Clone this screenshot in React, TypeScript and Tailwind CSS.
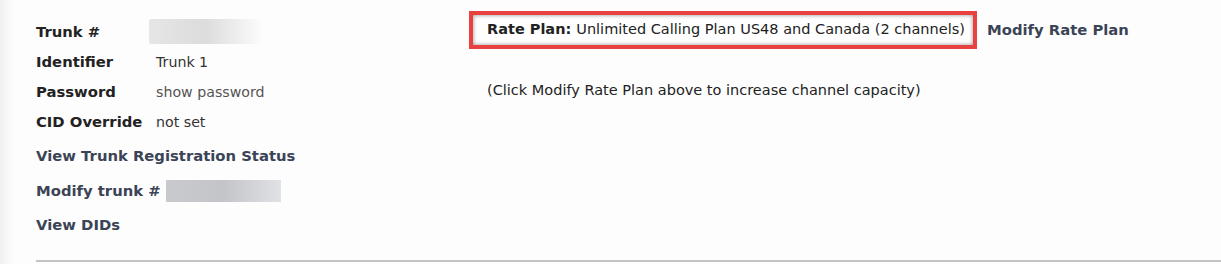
import React from "react";

export default function App() {
  const label = "font-bold text-[#222] text-[14.8px]";
  const link = "font-bold text-[#3b4456] text-[14.8px]";
  return (
    <div className="w-[1221px] h-[264px] bg-[#fdfdfd] overflow-hidden font-['DejaVu_Sans',sans-serif] text-[14.2px] relative">
      <div className="absolute left-0 top-0 h-full w-[14px] bg-gradient-to-r from-[#f0f0f0] to-[#fdfdfd]" />
      <div className="pl-[36px] pt-[19px] flex">
        <div className="w-[433px] shrink-0">
          <div className="grid grid-cols-[120px_1fr] gap-y-[6px] items-center leading-[24px]">
            <div className={label}>Trunk #</div>
            <div className="h-[25px] w-[112px] -ml-[7px] bg-gradient-to-r from-[#e6e6e6] via-[#dcdcdc] to-[#fbfbfb] rounded-[2px]" />
            <div className={label}>Identifier</div>
            <div className="text-[#333]">Trunk 1</div>
            <div className={label}>Password</div>
            <div className="text-[#555]">show password</div>
            <div className={label}>CID Override</div>
            <div className="text-[#333]">not set</div>
          </div>
          <div className={`${link} mt-[10px] leading-[24px]`}>View Trunk Registration Status</div>
          <div className="mt-[11px] flex items-center gap-[5px] leading-[24px]">
            <span className={link}>Modify trunk #</span>
            <div className="h-[22px] w-[115px] bg-gradient-to-r from-[#c9cacd] via-[#c4c5ca] to-[#e1e2e5]" />
          </div>
          <div className={`${link} mt-[10px] leading-[24px]`}>View DIDs</div>
        </div>
        <div className="flex-1 -mt-[8px]">
          <div className="flex items-center">
            <div className="border-[4px] border-[#e8413f] w-[508px] h-[38px] flex items-center pl-[14px] shadow-[inset_0_0_4px_rgba(0,0,0,0.45)] bg-white text-[#222] text-[14.5px]">
              <span className="font-bold">Rate Plan:</span>
              <span className="ml-[5px]">Unlimited Calling Plan US48 and Canada (2 channels)</span>
            </div>
            <span className={`${link} ml-[10px]`}>Modify Rate Plan</span>
          </div>
          <div className="mt-[31px] pl-[18px] text-[#222] text-[14.5px]">(Click Modify Rate Plan above to increase channel capacity)</div>
        </div>
      </div>
      <div className="absolute left-[36px] right-0 top-[260px] h-[2px] bg-[#c4c4c4]" />
    </div>
  );
}
